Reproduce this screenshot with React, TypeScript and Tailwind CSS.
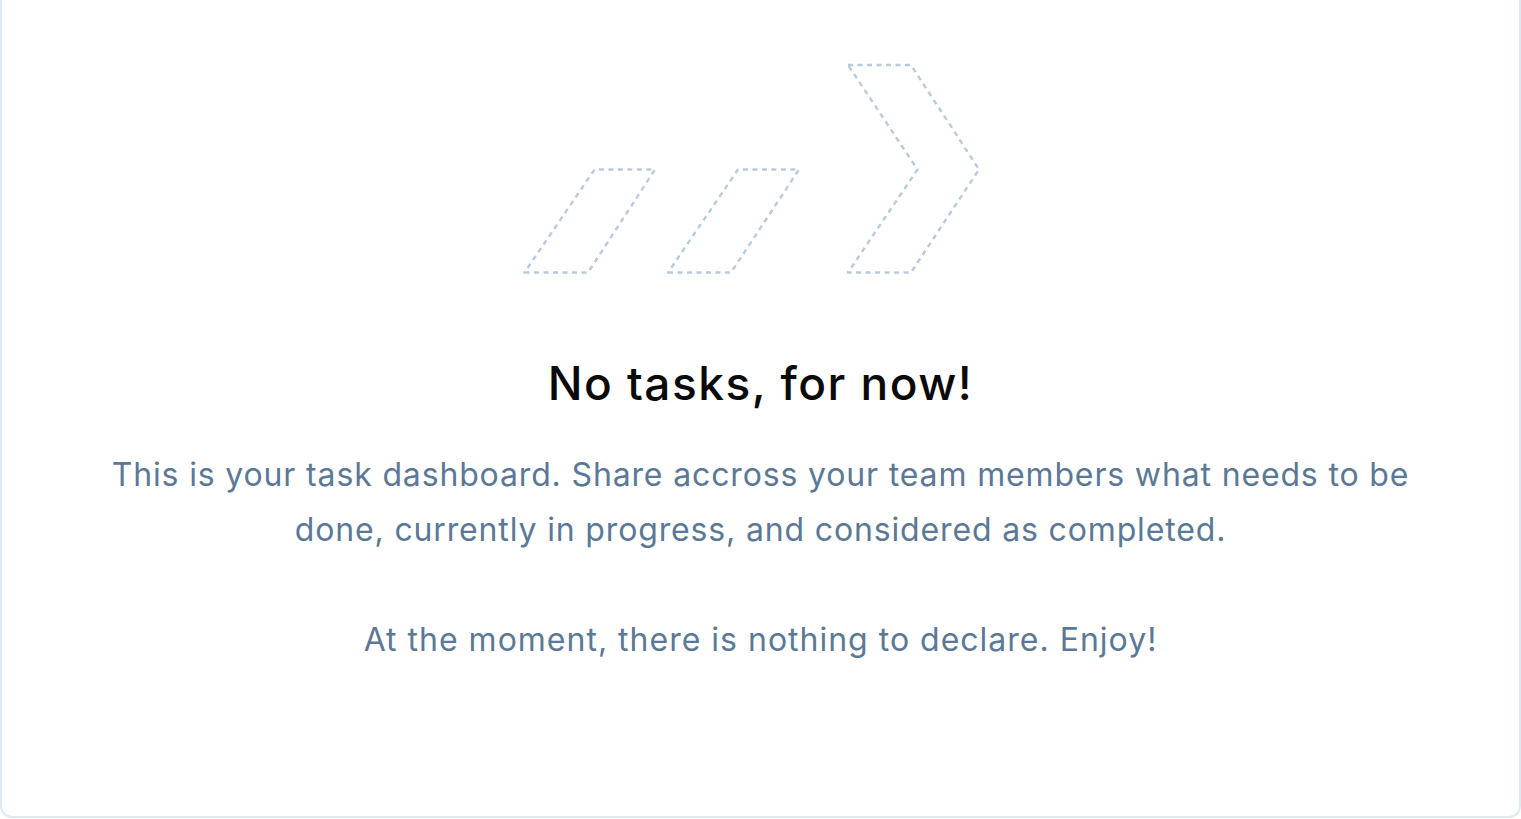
const FONT = { fontFamily: "Inter, 'Noto Sans', sans-serif" };

function Illustration() {
  return (
    <svg
      width="500"
      height="214"
      viewBox="510 62 500 214"
      fill="none"
      stroke="#b9cadd"
      strokeWidth="2.4"
      strokeDasharray="5 4.5"
      strokeLinejoin="round"
    >
      <path d="M523.5 272.5 L587 272.5 L654 169.5 L593.5 169.5 Z" />
      <path d="M667 272.5 L730 272.5 L798 169.5 L737 169.5 Z" />
      <path d="M847 65 L910 65 L978 169.5 L910 272.5 L847 272.5 L916.5 169.5 Z" />
    </svg>
  );
}

export default function App() {
  return (
    <div className="h-[819px] w-full overflow-hidden bg-white" style={FONT}>
      <div className="flex h-[818px] flex-col items-center rounded-b-xl border-x-2 border-b-2 border-[#dfe9f3] pt-[62px]">
        <Illustration />
        <h1 className="mt-[79px] text-[46px] font-medium leading-[56px] tracking-[1.5px] text-[#0a0a0a]">
          No tasks, for now!
        </h1>
        <p className="mt-[36px] max-w-[1320px] text-center text-[32px] leading-[55px] tracking-[0.85px] text-[#5b7896]">
          This is your task dashboard. Share accross your team members what needs to be done,
          currently in progress, and considered as completed.
        </p>
        <p className="mt-[55px] text-center text-[32px] leading-[55px] tracking-[1px] text-[#5b7896]">
          At the moment, there is nothing to declare. Enjoy!
        </p>
      </div>
    </div>
  );
}
